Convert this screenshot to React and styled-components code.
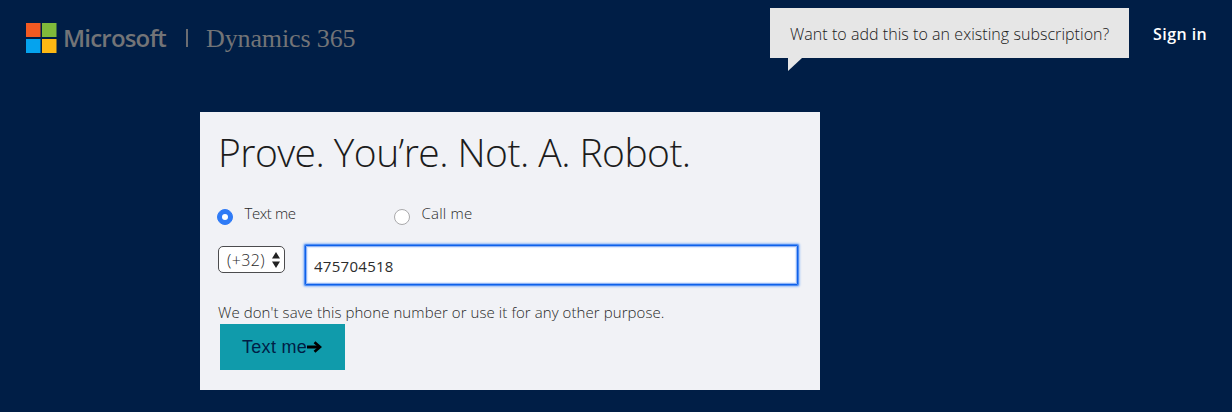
import React from "react";
import styled, { createGlobalStyle } from "styled-components";

const light = '"Open Sans", "Noto Sans", sans-serif';

const GlobalStyle = createGlobalStyle`
  * { box-sizing: border-box; }
  body {
    margin: 0;
    min-height: 412px;
    background: #001e46;
    font-family: ${light};
    font-weight: 300;
    overflow: hidden;
  }
`;

const Page = styled.div`
  width: 1232px;
  height: 412px;
  background: #001e46;
`;

const Header = styled.header`
  display: flex;
  align-items: flex-start;
  height: 112px;
  padding: 8px 25px 0 26px;
`;

const Brand = styled.div`
  display: flex;
  align-items: center;
  height: 30px;
  margin-top: 15px;
  color: #737477;
  white-space: nowrap;
`;

const Logo = styled.svg`
  display: block;
  width: 31px;
  height: 30px;
`;

const Wordmark = styled.span`
  width: 104px;
  margin-left: 6px;
  font: 600 24px/30px ${light};
  letter-spacing: -0.8px;
`;

const Separator = styled.span`
  width: 2px;
  height: 18px;
  margin: 0 0 0 19px;
  background: #6b6d72;
`;

const Product = styled.span`
  margin-left: 18px;
  padding-top: 1px;
  font: 400 26px/30px "Liberation Serif", serif;
  letter-spacing: -0.12px;
`;

const Bubble = styled.div`
  position: relative;
  width: 359px;
  height: 50px;
  margin-left: auto;
  padding-left: 20px;
  background: #e6e6e6;
  color: #202020;
  font-size: 16px;
  line-height: 52px;
  letter-spacing: 0.045px;
  white-space: nowrap;
`;

const Tail = styled.svg`
  position: absolute;
  left: 18px;
  top: 50px;
  width: 14px;
  height: 13px;
`;

const SignIn = styled.a`
  width: 54px;
  margin-left: 24px;
  color: #fff;
  font-size: 16px;
  font-weight: 600;
  line-height: 52px;
  letter-spacing: 0.45px;
  white-space: nowrap;
`;

const Panel = styled.main`
  width: 620px;
  height: 278px;
  margin-left: 200px;
  padding: 14px 18px 0;
  background: #f1f2f6;
  color: #282828;
`;

const Title = styled.h1`
  margin: 0;
  color: #1c1c1c;
  font-size: 39px;
  font-weight: 300;
  line-height: 52px;
  letter-spacing: -0.55px;
  white-space: nowrap;
`;

const Options = styled.div`
  display: flex;
  height: 30px;
  margin-top: 24px;
  margin-left: -1px;
`;

const Option = styled.label`
  display: flex;
  width: 177px;
  font-size: 15px;
  line-height: 22px;
  letter-spacing: ${(p) => p.$tracking};
`;

const Radio = styled.span`
  display: flex;
  align-items: center;
  justify-content: center;
  width: 16px;
  height: 16px;
  margin: 7px 11.5px 0 0;
  border: 1px solid ${(p) => (p.$checked ? "#2f7bf6" : "#a9a9ab")};
  border-radius: 50%;
  background: ${(p) => (p.$checked ? "#2f7bf6" : "#fff")};

  &::after {
    content: "";
    width: 6px;
    height: 6px;
    border-radius: 50%;
    background: #fff;
  }
`;

const PhoneRow = styled.div`
  display: flex;
  align-items: flex-start;
  gap: 20px;
  height: 42px;
  margin-top: 12px;
`;

const CodeSelect = styled.div`
  display: flex;
  align-items: center;
  justify-content: space-between;
  width: 67px;
  height: 27px;
  margin-top: 2px;
  padding: 0 4px 0 8px;
  border: 1px solid #4c4c4e;
  border-radius: 5px;
  background: #fff;
  font-size: 16px;
  line-height: 26px;
  letter-spacing: 0.4px;
`;

const Arrows = styled.svg`
  width: 8px;
  height: 16px;
`;

const PhoneInput = styled.input`
  width: 493px;
  height: 40px;
  margin-top: 1px;
  padding: 1px 8px 0;
  border: 1px solid #0e61ea;
  border-radius: 1px;
  outline: none;
  background: #fff;
  box-shadow: 0 0 0 1px #4f8df2, 0 0 2px 2px #9cc0f8, inset 0 0 0 1px #8fb4f6, inset 0 0 1px 2px #dfeafd;
  color: #2c2c2c;
  font: 400 15px/24px ${light};
  letter-spacing: 0.28px;
`;

const Note = styled.p`
  height: 24px;
  margin: 14px 0 0;
  font-size: 15px;
  line-height: 24px;
  letter-spacing: 0.075px;
  white-space: nowrap;
`;

const Submit = styled.button`
  display: flex;
  align-items: center;
  width: 125px;
  height: 46px;
  margin-left: 2px;
  padding: 0 0 0 22px;
  border: 0;
  background: #109bab;
  color: #001e46;
  font: 400 18px/46px "Liberation Sans", sans-serif;
  letter-spacing: 0.3px;
  white-space: nowrap;
`;

const Arrow = styled.svg`
  width: 15px;
  height: 12px;
`;

export default function App() {
  return (
    <>
      <GlobalStyle />
      <Page>
        <Header>
          <Brand>
            <Logo viewBox="0 0 31 30">
              <path d="M0 0h14.5v14H0z" fill="#f25a22" />
              <path d="M16 0h14.5v14H16z" fill="#80bb3a" />
              <path d="M0 16h14.5v14H0z" fill="#05a3ee" />
              <path d="M16 16h14.5v14H16z" fill="#fdb813" />
            </Logo>
            <Wordmark>Microsoft</Wordmark>
            <Separator />
            <Product>Dynamics 365</Product>
          </Brand>
          <Bubble>
            Want to add this to an existing subscription?
            <Tail viewBox="0 0 14 13">
              <path d="M0 0h14L0 13z" fill="#e6e6e6" />
            </Tail>
          </Bubble>
          <SignIn>Sign in</SignIn>
        </Header>
        <Panel>
          <Title>Prove. You’re. Not. A. Robot.</Title>
          <Options>
            <Option $tracking="-0.4px">
              <Radio $checked />
              Text me
            </Option>
            <Option $tracking="0.2px">
              <Radio />
              Call me
            </Option>
          </Options>
          <PhoneRow>
            <CodeSelect>
              (+32)
              <Arrows viewBox="0 0 8 16">
                <path d="M4 0l4 6.5H0zM4 16l4-6.5H0z" fill="#222" />
              </Arrows>
            </CodeSelect>
            <PhoneInput defaultValue="475704518" />
          </PhoneRow>
          <Note>We don't save this phone number or use it for any other purpose.</Note>
          <Submit>
            Text me
            <Arrow viewBox="0 0 15 12">
              <path d="M0 6h12" stroke="#000" strokeWidth="3" fill="none" />
              <path d="M7.5 1.2l5.5 4.8-5.5 4.8" stroke="#000" strokeWidth="2.7" fill="none" />
            </Arrow>
          </Submit>
        </Panel>
      </Page>
    </>
  );
}
